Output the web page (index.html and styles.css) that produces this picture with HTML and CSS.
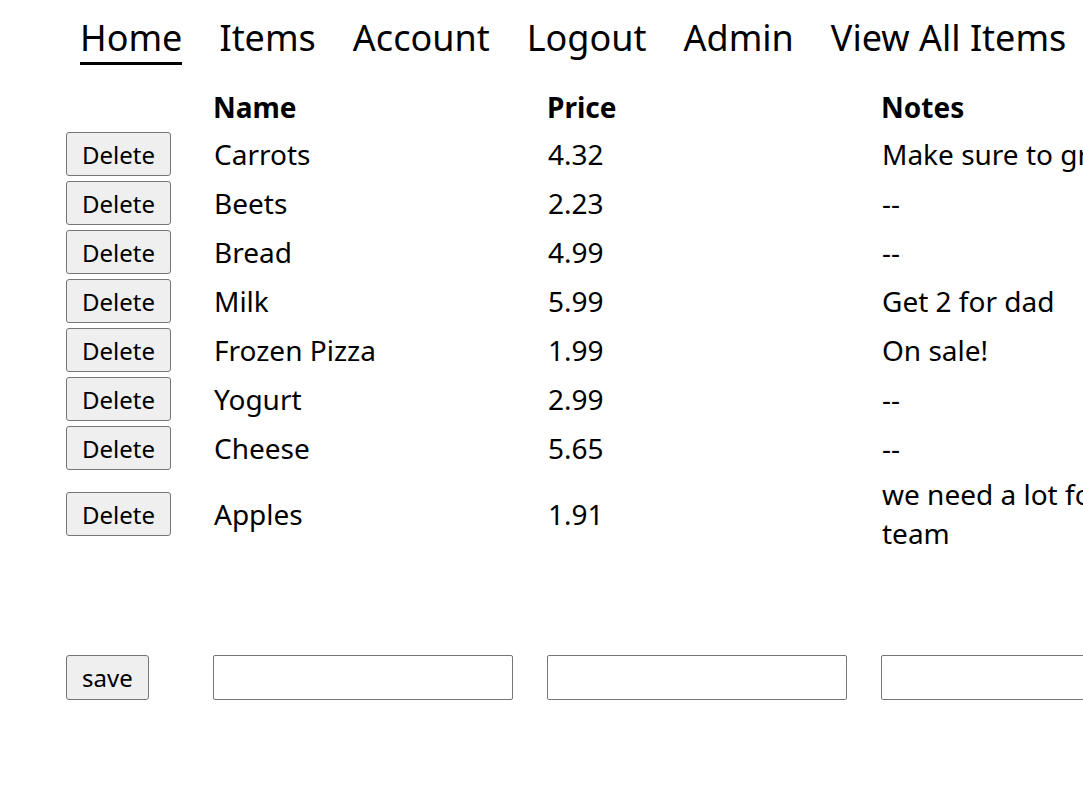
FILE: index.html
```html
<!DOCTYPE html>
<html lang="en">
<head>
<meta charset="utf-8">
<title>Items</title>
<link rel="stylesheet" href="styles.css">
</head>
<body>
<nav class="nav">
  <a class="nav-link active" href="#">Home</a>
  <a class="nav-link" href="#">Items</a>
  <a class="nav-link" href="#">Account</a>
  <a class="nav-link" href="#">Logout</a>
  <a class="nav-link" href="#">Admin</a>
  <a class="nav-link" href="#">View All Items</a>
</nav>
<main class="content">
  <div class="items">
    <div class="head"></div>
    <div class="head">Name</div>
    <div class="head">Price</div>
    <div class="head">Notes</div>

    <button class="btn" type="button">Delete</button>
    <div class="cell">Carrots</div>
    <div class="cell">4.32</div>
    <div class="cell">Make sure to grab</div>

    <button class="btn" type="button">Delete</button>
    <div class="cell">Beets</div>
    <div class="cell">2.23</div>
    <div class="cell">--</div>

    <button class="btn" type="button">Delete</button>
    <div class="cell">Bread</div>
    <div class="cell">4.99</div>
    <div class="cell">--</div>

    <button class="btn" type="button">Delete</button>
    <div class="cell">Milk</div>
    <div class="cell">5.99</div>
    <div class="cell">Get 2 for dad</div>

    <button class="btn" type="button">Delete</button>
    <div class="cell">Frozen Pizza</div>
    <div class="cell">1.99</div>
    <div class="cell">On sale!</div>

    <button class="btn" type="button">Delete</button>
    <div class="cell">Yogurt</div>
    <div class="cell">2.99</div>
    <div class="cell">--</div>

    <button class="btn" type="button">Delete</button>
    <div class="cell">Cheese</div>
    <div class="cell">5.65</div>
    <div class="cell">--</div>

    <button class="btn" type="button">Delete</button>
    <div class="cell">Apples</div>
    <div class="cell">1.91</div>
    <div class="cell">we need a lot for the team</div>
  </div>

  <form class="add-form">
    <button class="btn btn-save" type="button">save</button>
    <input class="field" type="text" aria-label="Name">
    <input class="field" type="text" aria-label="Price">
    <input class="field" type="text" aria-label="Notes">
  </form>
</main>
</body>
</html>
```

FILE: styles.css
```css
html, body {
  margin: 0;
  padding: 0;
  background: #ffffff;
  overflow-x: hidden;
}

body {
  font-family: "Noto Sans", "Open Sans", sans-serif;
  color: #000000;
}

.nav {
  display: flex;
  gap: 37px;
  padding: 13px 0 0 80px;
}

.nav-link {
  font-size: 36px;
  line-height: 49px;
  color: #000000;
  text-decoration: none;
  border-bottom: 3px solid transparent;
  white-space: nowrap;
}

.nav-link.active {
  border-bottom-color: #000000;
}

.content {
  padding: 23px 0 0 66px;
}

.items,
.add-form {
  display: grid;
  grid-template-columns: 147px 334px 334px 300px;
  row-gap: 5px;
  align-items: center;
  justify-items: start;
}

.head {
  font-size: 28px;
  line-height: 39px;
  font-weight: 700;
}

.cell {
  font-size: 28px;
  line-height: 39px;
  padding-left: 1px;
}

.btn {
  font-family: "Noto Sans", sans-serif;
  font-size: 24px;
  height: 44px;
  padding: 0 15px;
  margin: 0;
  color: #000000;
  background: #efefef;
  border: 1px solid #767676;
  border-radius: 3px;
}

.add-form {
  margin-top: 102px;
}

.btn-save {
  height: 45px;
}

.field {
  box-sizing: border-box;
  width: 300px;
  height: 45px;
  margin: 0;
  font-size: 24px;
  border: 1px solid #767676;
  border-radius: 2px;
  background: #ffffff;
}
```
